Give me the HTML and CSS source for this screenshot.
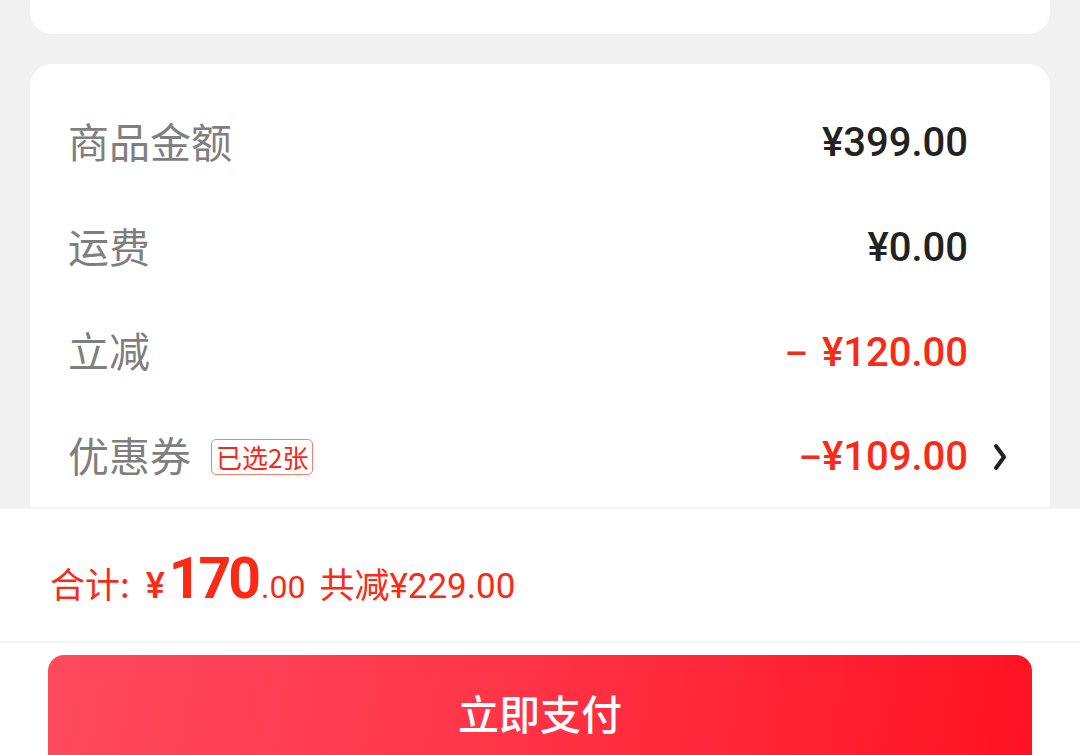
FILE: index.html
```html
<!DOCTYPE html>
<html lang="zh">
<head>
<meta charset="utf-8">
<title>订单结算</title>
<link rel="stylesheet" href="styles.css">
</head>
<body>
<div class="page">
  <div class="card card-top"></div>
  <div class="card card-price">
    <div class="row">
      <span class="label">商品金额</span>
      <span class="amount dark">¥399.00</span>
      <span class="chev-slot"></span>
    </div>
    <div class="row">
      <span class="label">运费</span>
      <span class="amount dark">¥0.00</span>
      <span class="chev-slot"></span>
    </div>
    <div class="row">
      <span class="label">立减</span>
      <span class="amount red"><span class="minus spaced">–</span>¥120.00</span>
      <span class="chev-slot"></span>
    </div>
    <div class="row">
      <span class="label">优惠券</span>
      <span class="tag">已选2张</span>
      <span class="amount red"><span class="minus">–</span>¥109.00</span>
      <span class="chev-slot">
        <svg class="chev" width="14" height="30" viewBox="0 0 14 30"><path d="M3 4 L11 15 L3 26" fill="none" stroke="#222" stroke-width="4" stroke-linecap="round" stroke-linejoin="round"/></svg>
      </span>
    </div>
  </div>
</div>
<div class="bottom-bar">
  <div class="summary">
    <span class="s-label">合计:</span>
    <span class="s-yen">¥</span><span class="s-big">170</span><span class="s-small">.00</span>
    <span class="s-save">共减<span class="num">¥229.00</span></span>
  </div>
  <div class="pay-wrap">
    <div class="pay-btn">立即支付</div>
  </div>
</div>
</body>
</html>
```

FILE: styles.css
```css
* { box-sizing: border-box; }
html, body {
  margin: 0;
  padding: 0;
  background: #f1f1f1;
  font-family: "Noto Sans CJK SC", "Noto Sans", sans-serif;
  height: 755px;
  overflow: hidden;
}
.page {
  padding: 0 30px;
}
.card {
  background: #fff;
}
.card-top {
  height: 34px;
  border-radius: 0 0 22px 22px;
}
.card-price {
  margin-top: 30px;
  border-radius: 22px;
  padding: 27px 38px 40px 38px;
}
.row {
  height: 104.7px;
  display: flex;
  align-items: center;
}
.label {
  font-size: 41px;
  color: #7f7f7f;
  line-height: 1;
  padding-bottom: 6px;
}
.tag {
  margin-left: 20px;
  font-size: 26px;
  line-height: 34px;
  height: 36px;
  padding: 0 4px;
  color: #f5281a;
  border: 1px solid #f3806f;
  border-radius: 5px;
}
.amount {
  margin-left: auto;
  font-family: Roboto, "Noto Sans", sans-serif;
  font-weight: 500;
  font-size: 40px;
  line-height: 1;
}
.minus {
  font-size: 36px;
}
.minus.spaced {
  margin-right: 14px;
}
.dark { color: #222; }
.red { color: #fa2a16; }
.chev-slot {
  width: 44px;
  display: flex;
  justify-content: flex-end;
  align-items: center;
}
.chev { display: block; margin-right: 5px; }

.bottom-bar {
  position: fixed;
  left: 0;
  right: 0;
  bottom: 0;
  height: 248px;
  background: #fff;
  border-top: 2px solid #f3f3f3;
}
.summary {
  height: 134px;
  border-bottom: 2px solid #f3f3f3;
  display: flex;
  align-items: baseline;
  padding: 36px 0 0 50px;
  color: #fa2a16;
}
.s-label {
  font-size: 35px;
  margin-right: 16px;
}
.s-yen {
  font-family: Roboto, "Noto Sans", sans-serif;
  font-size: 36px;
  font-weight: 500;
}
.s-big {
  font-family: Roboto, "Noto Sans", sans-serif;
  font-size: 57px;
  font-weight: 700;
  letter-spacing: -3px;
  margin-left: 4px;
}
.s-small {
  font-family: Roboto, "Noto Sans", sans-serif;
  font-size: 32px;
  margin-left: 3px;
}
.s-save {
  font-size: 35px;
  margin-left: 14px;
}
.s-save .num {
  font-family: Roboto, "Noto Sans", sans-serif;
}
.pay-wrap {
  padding: 12px 48px 0 48px;
}
.pay-btn {
  height: 120px;
  border-radius: 16px 16px 0 0;
  background: linear-gradient(100deg, #ff4a5e 0%, #ff3548 45%, #ff1222 100%);
  color: #fff;
  font-size: 41px;
  font-weight: 500;
  text-align: center;
  padding-top: 37px;
  line-height: 1;
}
```
